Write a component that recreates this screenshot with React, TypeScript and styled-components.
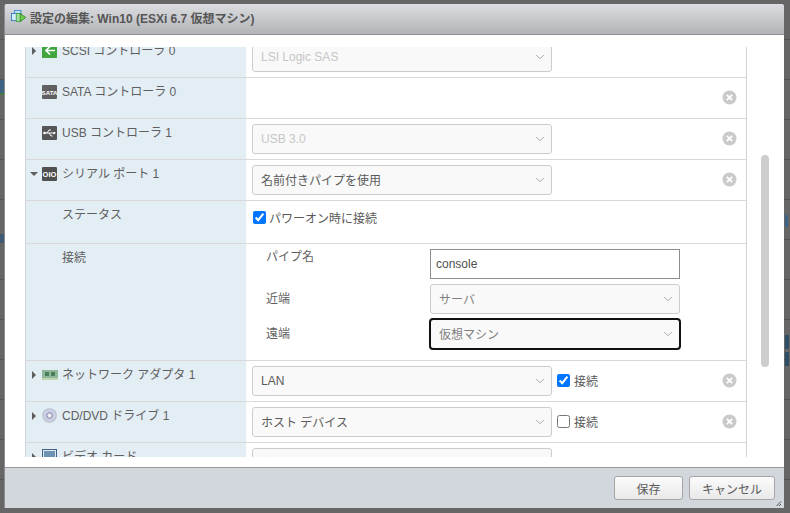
import React from "react";
import styled, { createGlobalStyle } from "styled-components";
import { ChevronDown } from "lucide-react";

const GlobalStyle = createGlobalStyle`
    html, body {
        margin: 0;
        padding: 0;
        height: 100%;
        overflow: hidden;
    }
    body {
        font-family: "Liberation Sans", "Noto Sans CJK JP", sans-serif;
        font-size: 12px;
        color: #565656;
    }
`;

const Backdrop = styled.div`
    width: 790px;
    height: 513px;
    box-sizing: border-box;
    padding: 4px 6px 5px 4px;
    background:
        linear-gradient(#3f6385, #3f6385) 0 80px / 4px 13px no-repeat,
        linear-gradient(#3f7a3f, #3f7a3f) 0 93px / 4px 2px no-repeat,
        linear-gradient(#3f5a75, #3f5a75) 0 234px / 4px 9px no-repeat,
        linear-gradient(#3f6385, #3f6385) 785px 215px / 3px 12px no-repeat,
        linear-gradient(#2f4f66, #2f4f66) 785px 335px / 4px 14px no-repeat,
        linear-gradient(#2f4f66, #2f4f66) 785px 352px / 4px 14px no-repeat,
        repeating-linear-gradient(to bottom, transparent 0, transparent 39px, #545454 39px, #545454 40px) #666;
`;

const Modal = styled.div`
    position: relative;
    display: flex;
    flex-direction: column;
    height: 504px;
    box-sizing: border-box;
    border-left: 1px solid #8d8d8d;
    border-radius: 3px 3px 0 0;
    background: #fff;
    overflow: hidden;
`;

const Header = styled.div`
    display: flex;
    align-items: center;
    gap: 3px;
    height: 31px;
    flex: none;
    box-sizing: border-box;
    padding: 0 0 3px 6px;
    background: linear-gradient(to bottom, #dcdde0, #b3b4b7);
    border-bottom: 1px solid #8f9092;
`;

const Title = styled.div`
    font-size: 12px;
    font-weight: bold;
    color: #555;
    white-space: nowrap;
`;

const Body = styled.div`
    flex: 1;
    min-height: 0;
    display: flex;
    gap: 14px;
    padding: 12px 14px 10px 20px;
`;

const Scroller = styled.div`
    width: 722px;
    flex: none;
    box-sizing: border-box;
    overflow: hidden;
    border-left: 1px solid #ccd5dc;
    border-right: 1px solid #d4d4d4;
`;

const List = styled.div`
    margin-top: -10px;
`;

const Track = styled.div`
    width: 8px;
    flex: none;
    padding-top: 108px;
`;

const Thumb = styled.div`
    width: 8px;
    height: 212px;
    border-radius: 4px;
    background: #cdcdcd;
`;

const Row = styled.div<{ $height?: number }>`
    display: grid;
    grid-template-columns: 220px 1fr;
    height: ${(p) => p.$height ?? 41}px;
    box-sizing: border-box;
    border-bottom: 1px solid #d9d9d9;
`;

const LabelCell = styled.div`
    display: flex;
    align-items: flex-start;
    background: #e3edf4;
    padding: 6px 0 0 5px;
`;

const Caret = styled.span`
    width: 11px;
    height: 15px;
    flex: none;
    display: flex;
    align-items: center;
    color: #5d5d5d;
`;

const IconSlot = styled.span`
    width: 15px;
    height: 15px;
    flex: none;
    margin-right: 5px;
    display: flex;
    align-items: center;
    justify-content: center;
`;

const LabelText = styled.span`
    line-height: 15px;
    margin-top: 1px;
    color: #5f5f5f;
    white-space: nowrap;
`;

const SubLabel = styled.div`
    background: #e3edf4;
    padding: 7px 0 0 36px;
    line-height: 15px;
    color: #5f5f5f;
`;

const ControlCell = styled.div`
    display: flex;
    align-items: flex-start;
    padding: 5px 9px 0 6px;
    min-width: 0;
`;

const selectColor = (p: { $disabled?: boolean; $muted?: boolean; $focused?: boolean }) => {
    if (p.$disabled) return "#c6c6c6";
    if (p.$muted || p.$focused) return "#808080";
    return "#5a5a5a";
};

const SelectBox = styled.div<{ $disabled?: boolean; $muted?: boolean; $focused?: boolean; $width?: number }>`
    width: ${(p) => p.$width ?? 300}px;
    height: 30px;
    flex: none;
    display: flex;
    align-items: center;
    justify-content: space-between;
    box-sizing: border-box;
    padding: 0 4px 1px 8px;
    background: #f9f9f9;
    border-radius: 3px;
    border: 1px solid #ccc;
    color: ${selectColor};
    ${(p) => p.$focused && "outline: 2px solid #111; outline-offset: -1px;"}

    svg {
        color: #9c9c9c;
    }
`;

const InlineCheck = styled.label`
    display: flex;
    align-items: center;
    gap: 4px;
    height: 29px;
    margin-left: 5px;
    color: #5a5a5a;
    white-space: nowrap;
`;

const Checkbox = styled.input.attrs({ type: "checkbox", readOnly: true })`
    width: 13px;
    height: 13px;
    margin: 0;
    flex: none;
`;

const RemoveButton = styled.span`
    margin-left: auto;
    margin-top: 7px;
    flex: none;
    display: flex;
`;

const StatusLine = styled.label`
    display: flex;
    align-items: center;
    gap: 3px;
    margin: 3px 0 0 1px;
    color: #5a5a5a;
`;

const ConnectGrid = styled.div`
    display: grid;
    grid-template-columns: 164px 250px;
    grid-auto-rows: 30px;
    row-gap: 5px;
    padding: 5px 0 0 20px;
`;

const ConnectLabel = styled.div<{ $top: number }>`
    color: #5f5f5f;
    line-height: 15px;
    padding-top: ${(p) => p.$top}px;
`;

const TextField = styled.div`
    box-sizing: border-box;
    height: 30px;
    border: 1px solid #8e8e8e;
    padding: 0 5px;
    line-height: 28px;
    color: #4f4f4f;
`;

const Footer = styled.div`
    height: 41px;
    flex: none;
    box-sizing: border-box;
    display: flex;
    justify-content: flex-end;
    gap: 6px;
    padding: 8px 9px 0 0;
    background: #d1d7dd;
    border-top: 1px solid #999;
`;

const Button = styled.div<{ $width: number }>`
    width: ${(p) => p.$width}px;
    height: 24px;
    box-sizing: border-box;
    display: flex;
    align-items: center;
    justify-content: center;
    border: 1px solid #a5a5a5;
    border-radius: 3px;
    background: linear-gradient(to bottom, #fbfbfb, #e9e9e9);
    color: #5a5a5a;
`;

const Grip = styled.svg`
    position: absolute;
    right: 2px;
    bottom: 1px;
`;

const CaretRight = () => (
    <svg width="6" height="8" viewBox="0 0 6 8"><path d="M1 0l4 4-4 4z" fill="#5d5d5d" /></svg>
);

const CaretDown = () => (
    <svg width="8" height="6" viewBox="0 0 8 6" style={{ marginLeft: -1 }}><path d="M0 1h8L4 5z" fill="#5d5d5d" /></svg>
);

const RemoveIcon = () => (
    <svg width="15" height="15" viewBox="0 0 15 15">
        <circle cx="7.5" cy="7.5" r="7" fill="#cacaca" />
        <path d="M4.8 4.8l5.4 5.4M10.2 4.8l-5.4 5.4" stroke="#fff" strokeWidth="1.8" />
    </svg>
);

const VmIcon = () => (
    <svg width="16" height="15" viewBox="0 0 20 19" style={{ flex: "none" }}>
        <rect x="4.5" y="0.5" width="8" height="8" fill="#bfe0f7" stroke="#2a7fd0" />
        <rect x="0.5" y="4.5" width="10" height="9" fill="#d5ebfa" stroke="#1f6fc4" />
        <rect x="6.5" y="4.5" width="6" height="10" fill="#9fdf9f" stroke="#3c9a3c" />
        <path d="M11.5 4.5v10l7-5z" fill="#6fd04e" stroke="#2a7d22" />
    </svg>
);

const ScsiIcon = () => (
    <svg width="15" height="15" viewBox="0 0 15 15">
        <rect width="15" height="15" fill="#42a63f" />
        <path d="M8 3.5L4 7.5l4 4M4.5 7.5H13" fill="none" stroke="#fff" strokeWidth="1.7" />
    </svg>
);

const SataIcon = () => (
    <svg width="15" height="14" viewBox="0 0 15 14">
        <rect width="15" height="14" rx="1" fill="#606060" />
        <text x="7.5" y="9.5" textAnchor="middle" fontSize="6.2" fontWeight="bold" fill="#fff" fontFamily="Liberation Sans">SATA</text>
    </svg>
);

const UsbIcon = () => (
    <svg width="15" height="14" viewBox="0 0 15 14">
        <rect width="15" height="14" rx="1" fill="#555" />
        <path d="M2 7h11M5 7l2-3h2M7 7l2 3h1.500" fill="none" stroke="#fff" strokeWidth="1" />
        <circle cx="2.500" cy="7" r="1.300" fill="#fff" />
        <path d="M11.500 5.500L14 7l-2.500 1.500z" fill="#fff" />
    </svg>
);

const SerialIcon = () => (
    <svg width="15" height="14" viewBox="0 0 15 14">
        <rect width="15" height="14" rx="1" fill="#505050" />
        <text x="7.5" y="9.8" textAnchor="middle" fontSize="7.5" fontWeight="bold" fill="#fff" fontFamily="Liberation Sans">OIO</text>
    </svg>
);

const NicIcon = () => (
    <svg width="16" height="10" viewBox="0 0 16 10" style={{ flex: "none" }}>
        <rect width="16" height="8.500" fill="#8fb89a" />
        <rect x="3" y="2" width="4" height="4" fill="#4a7f5c" />
        <rect x="9" y="2" width="4" height="4" fill="#4a7f5c" />
        <rect y="8.500" width="16" height="1.500" fill="#c3d4a8" />
    </svg>
);

const DiscIcon = () => (
    <svg width="15" height="15" viewBox="0 0 15 15">
        <defs>
            <radialGradient id="disc" cx="0.5" cy="0.5" r="0.6">
                <stop offset="0.2" stopColor="#b9a8dc" />
                <stop offset="0.6" stopColor="#cdd6e6" />
                <stop offset="1" stopColor="#9fa3ad" />
            </radialGradient>
        </defs>
        <circle cx="7.5" cy="7.5" r="7.300" fill="url(#disc)" />
        <circle cx="7.5" cy="7.5" r="2.500" fill="#f1f1f4" stroke="#8f95a8" />
    </svg>
);

const MonitorIcon = () => (
    <svg width="15" height="15" viewBox="0 0 15 15">
        <rect x="0.500" y="0.500" width="14" height="14" fill="#dfe7ef" stroke="#3f6285" />
        <rect x="2" y="2" width="11" height="11" fill="#6e92b2" />
    </svg>
);

type Device = {
    label: string;
    icon: React.ReactNode;
    caret?: "right" | "down";
    value?: string;
    disabled?: boolean;
    connect?: boolean;
    removable?: boolean;
};

const topDevices: Device[] = [
    { label: "SCSI コントローラ 0", icon: <ScsiIcon />, caret: "right", value: "LSI Logic SAS", disabled: true },
    { label: "SATA コントローラ 0", icon: <SataIcon />, removable: true },
    { label: "USB コントローラ 1", icon: <UsbIcon />, value: "USB 3.0", disabled: true, removable: true },
    { label: "シリアル ポート 1", icon: <SerialIcon />, caret: "down", value: "名前付きパイプを使用", removable: true },
];

const bottomDevices: Device[] = [
    { label: "ネットワーク アダプタ 1", icon: <NicIcon />, caret: "right", value: "LAN", connect: true, removable: true },
    { label: "CD/DVD ドライブ 1", icon: <DiscIcon />, caret: "right", value: "ホスト デバイス", connect: false, removable: true },
    { label: "ビデオ カード", icon: <MonitorIcon />, caret: "right", value: "デフォルト設定を指定" },
];

const DeviceRow = ({ device }: { device: Device }) => (
    <Row>
        <LabelCell>
            <Caret>
                {device.caret === "right" && <CaretRight />}
                {device.caret === "down" && <CaretDown />}
            </Caret>
            <IconSlot>{device.icon}</IconSlot>
            <LabelText>{device.label}</LabelText>
        </LabelCell>
        <ControlCell>
            {device.value && (
                <SelectBox $disabled={device.disabled}>
                    {device.value}
                    <ChevronDown size={14} strokeWidth={1.5} />
                </SelectBox>
            )}
            {device.connect !== undefined && (
                <InlineCheck>
                    <Checkbox defaultChecked={device.connect} />
                    接続
                </InlineCheck>
            )}
            {device.removable && (
                <RemoveButton>
                    <RemoveIcon />
                </RemoveButton>
            )}
        </ControlCell>
    </Row>
);

export default function App() {
    return (
        <Backdrop>
            <GlobalStyle />
            <Modal>
                <Header>
                    <VmIcon />
                    <Title>設定の編集: Win10 (ESXi 6.7 仮想マシン)</Title>
                </Header>
                <Body>
                    <Scroller>
                        <List>
                            {topDevices.map((d) => (
                                <DeviceRow key={d.label} device={d} />
                            ))}
                            <Row $height={43}>
                                <SubLabel>ステータス</SubLabel>
                                <ControlCell>
                                    <StatusLine>
                                        <Checkbox defaultChecked />
                                        パワーオン時に接続
                                    </StatusLine>
                                </ControlCell>
                            </Row>
                            <Row $height={117}>
                                <SubLabel>接続</SubLabel>
                                <ConnectGrid>
                                    <ConnectLabel $top={1}>パイプ名</ConnectLabel>
                                    <TextField>console</TextField>
                                    <ConnectLabel $top={8}>近端</ConnectLabel>
                                    <SelectBox $width={250} $muted>
                                        サーバ
                                        <ChevronDown size={14} strokeWidth={1.5} />
                                    </SelectBox>
                                    <ConnectLabel $top={8}>遠端</ConnectLabel>
                                    <SelectBox $width={250} $focused>
                                        仮想マシン
                                        <ChevronDown size={14} strokeWidth={1.5} />
                                    </SelectBox>
                                </ConnectGrid>
                            </Row>
                            {bottomDevices.map((d) => (
                                <DeviceRow key={d.label} device={d} />
                            ))}
                        </List>
                    </Scroller>
                    <Track>
                        <Thumb />
                    </Track>
                </Body>
                <Footer>
                    <Button $width={69}>保存</Button>
                    <Button $width={86}>キャンセル</Button>
                </Footer>
                <Grip width="6" height="6" viewBox="0 0 6 6">
                    <path d="M5 0.500L0.500 5M5 3L3 5" stroke="#555" strokeWidth="1" />
                </Grip>
            </Modal>
        </Backdrop>
    );
}
